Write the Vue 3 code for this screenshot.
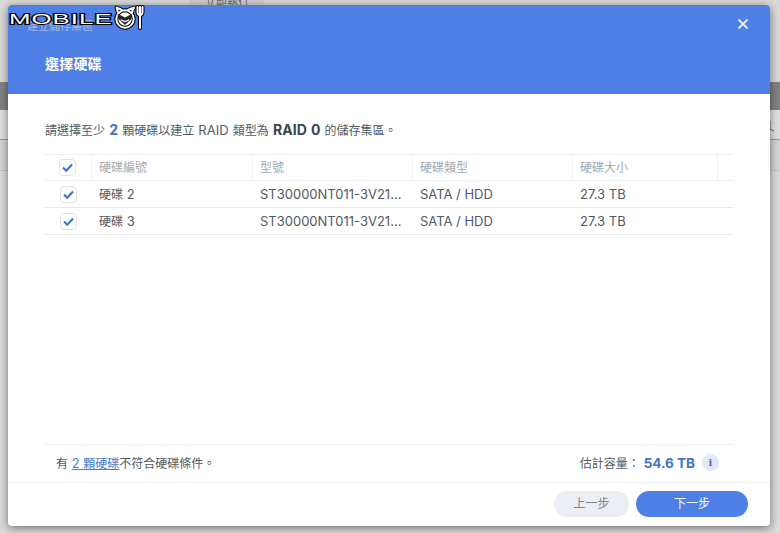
<template>
  <div class="page">
    <div class="backdrop">
      <div class="bg-top"><div class="bg-tab">立即執行</div></div>
      <div class="bg-band"></div>
      <div class="bg-row">
        <svg class="bg-mark" viewBox="0 0 8 12"><path d="M1 1V9L5 11" /></svg>
      </div>
      <div class="bg-row2"></div>
      <div class="bg-rest"></div>
    </div>

    <section class="dialog">
      <header class="head">
        <div class="crumb">建立儲存集區</div>
        <h1 class="title">選擇硬碟</h1>
        <svg class="close" viewBox="0 0 12 12" aria-label="關閉">
          <path d="M1.5 1.5 10.5 10.5M10.5 1.5 1.5 10.5" />
        </svg>
      </header>

      <div class="body">
        <p class="lead">
          <span class="zh">請選擇至少</span> <b class="blue">2</b> <span class="zh">顆硬碟以建立</span> RAID <span class="zh">類型為</span> <b class="dark">RAID 0</b> <span class="zh">的儲存集區。</span>
        </p>

        <div class="table">
          <div class="tr th">
            <div class="cell check"><span class="box"><svg viewBox="0 0 16 16"><path d="M3.2 8 6.6 11.4 12.9 4.8" /></svg></span></div>
            <div class="cell zh" v-for="c in columns" :key="c">{{ c }}</div>
            <div class="cell"></div>
          </div>
          <div class="tr" v-for="d in disks" :key="d.num">
            <div class="cell check"><span class="box"><svg viewBox="0 0 16 16"><path d="M3.2 8 6.6 11.4 12.9 4.8" /></svg></span></div>
            <div class="cell"><span class="zh">硬碟</span>&nbsp;{{ d.num }}</div>
            <div class="cell">{{ d.model }}</div>
            <div class="cell">{{ d.type }}</div>
            <div class="cell">{{ d.size }}</div>
            <div class="cell"></div>
          </div>
        </div>

        <div class="summary">
          <div><span class="zh">有</span> <a class="link">2 <span class="zh">顆硬碟</span></a><span class="zh">不符合硬碟條件。</span></div>
          <div class="capacity">
            <span class="zh">估計容量：</span>
            <b class="amount">54.6 TB</b>
            <span class="info">i</span>
          </div>
        </div>
      </div>

      <footer class="foot">
        <button class="btn prev zh">上一步</button>
        <button class="btn next zh">下一步</button>
      </footer>
    </section>

    <div class="logo">
      <span class="logo-text">MOBILE</span>
      <svg class="logo-face" viewBox="0 0 36 28">
        <g fill="none" stroke-linecap="round" stroke-linejoin="round">
          <g stroke="#000" stroke-width="4">
            <circle cx="12" cy="16" r="8.7" fill="#fff" />
            <path d="M5 9 3.5 4.5 9 7M19 9 21 4.5 15 7" />
            <path d="M24.5 4V9Q24.5 12 27 12Q29.5 12 29.5 9V4M27 4V25" />
          </g>
          <g stroke="#fff" stroke-width="2">
            <circle cx="12" cy="16" r="8.7" />
            <path d="M5 9 3.5 4.5 9 7M19 9 21 4.5 15 7" />
            <path d="M24.5 4V9Q24.5 12 27 12Q29.5 12 29.5 9V4M27 4V25" />
          </g>
          <path d="M5.5 11.5 12 15 18.5 11.5 18 16 12 21.5 6 16Z" fill="#222" stroke="#222" stroke-width="0.8" />
          <path d="M8.2 17 12 18.6 15.8 17" stroke="#fff" stroke-width="1.3" />
        </g>
      </svg>
    </div>
  </div>
</template>

<script setup>
const columns = ['硬碟編號', '型號', '硬碟類型', '硬碟大小']
const disks = [
  { num: 2, model: 'ST30000NT011-3V21...', type: 'SATA / HDD', size: '27.3 TB' },
  { num: 3, model: 'ST30000NT011-3V21...', type: 'SATA / HDD', size: '27.3 TB' }
]
</script>

<style>
html, body { margin: 0; background: #dcdcdc; }
</style>

<style scoped>
.page {
  position: relative;
  width: 780px;
  height: 533px;
  overflow: hidden;
  font-family: Inter, "Noto Sans CJK TC", sans-serif;
  font-size: 13px;
  color: #505a64;
}
.zh { font-size: 12px; }
.backdrop { display: flex; flex-direction: column; height: 100%; background: #dedede; }
.bg-top { height: 82px; background: #dadada; }
.bg-tab {
  width: 74px;
  height: 6px;
  margin-left: 190px;
  background: #cfcfcf;
  color: #666;
  font-size: 11px;
  line-height: 2px;
  text-align: center;
  overflow: hidden;
}
.bg-band { height: 28px; background: #828282; }
.bg-row {
  height: 29px;
  background: #e2e2e2;
  border-bottom: 1px solid #9a9a9a;
  display: flex;
  justify-content: flex-end;
}
.bg-mark {
  width: 8px;
  height: 12px;
  margin: 10px 3px 0 0;
  fill: none;
  stroke: #666;
  stroke-width: 1;
}
.bg-row2 { height: 30px; background: #d6d6d6; border-bottom: 1px solid #c4c4c4; }
.bg-rest { flex: 1; background: #dcdcdc; }

.dialog {
  position: absolute;
  left: 8px;
  top: 5px;
  width: 762px;
  height: 521px;
  display: flex;
  flex-direction: column;
  background: #fff;
  border-radius: 4px;
  overflow: hidden;
  box-shadow: 0 2px 10px rgba(0, 0, 0, 0.5);
}
.head {
  position: relative;
  height: 89px;
  flex: none;
  box-sizing: border-box;
  padding: 14px 37px 0 19px;
  background: #4d7fe4;
  color: #fff;
}
.crumb { font-size: 11px; line-height: 14px; opacity: 0.45; }
.title {
  margin: 21px 0 0 18px;
  font-size: 14px;
  line-height: 20px;
  font-weight: 700;
  letter-spacing: 0.2px;
}
.close {
  position: absolute;
  right: 21px;
  top: 13px;
  width: 12px;
  height: 12px;
  fill: none;
  stroke: #e6edfb;
  stroke-width: 1.9;
}
.body {
  flex: 1;
  display: flex;
  flex-direction: column;
  padding: 0 37px 0 36px;
  min-height: 0;
}
.lead { margin: 27px 0 0 1px; line-height: 18px; word-spacing: 0.5px; }
.blue { color: #3f6fc4; font-weight: 700; font-size: 14px; }
.dark { color: #3a4550; font-weight: 700; font-size: 14px; letter-spacing: 0.1px; }

.table { margin-top: 14px; border-top: 1px solid #eef0f2; }
.tr {
  display: grid;
  grid-template-columns: 48px 161px 160px 160px 145px 15px;
  height: 27px;
  box-sizing: border-box;
  border-bottom: 1px solid #e6e8eb;
}
.cell {
  display: flex;
  align-items: center;
  min-width: 0;
  padding: 0 0 1px 7px;
  white-space: nowrap;
}
.check { padding: 0 0 0 16px; }
.th { height: 26px; color: #a3aab2; border-bottom-color: #eef0f2; }
.th .cell { border-right: 1px solid #eef0f2; padding-bottom: 3px; }
.th .check { padding: 0 0 1px 15px; }
.th .cell:last-child { border-right: 0; }
.box {
  width: 17px;
  height: 17px;
  box-sizing: border-box;
  border: 1px solid #dfe3e9;
  border-radius: 4px;
  background: #fff;
  display: block;
}
.box svg {
  display: block;
  width: 15px;
  height: 15px;
  fill: none;
  stroke: #3f72d8;
  stroke-width: 2.3;
}

.summary {
  margin-top: auto;
  height: 38px;
  box-sizing: border-box;
  border-top: 1px solid #eef0f2;
  padding: 0 14px 2px 12px;
  display: flex;
  align-items: center;
  justify-content: space-between;
}
.link { color: #4a7cc8; text-decoration: underline; }
.capacity { display: flex; align-items: center; }
.amount { color: #4473c4; font-weight: 700; font-size: 13.5px; margin-left: 4px; }
.info {
  width: 17px;
  height: 17px;
  margin-left: 7px;
  border-radius: 50%;
  background: #e1e9f8;
  color: #4473c4;
  font: 700 10px/17px "DejaVu Serif", serif;
  text-align: center;
}
.foot {
  flex: none;
  height: 44px;
  box-sizing: border-box;
  border-top: 1px solid #eef0f2;
  padding: 8px 22px 0 0;
  display: flex;
  justify-content: flex-end;
  align-items: flex-start;
  gap: 7px;
}
.btn {
  height: 26px;
  border: 0;
  border-radius: 13px;
  padding: 0 0 1px;
  font-family: inherit;
  line-height: 25px;
}
.prev { width: 75px; background: #ebeef3; color: #7b838c; }
.next { width: 112px; background: #4d7fe4; color: #fff; }

.logo {
  position: absolute;
  left: 9px;
  top: 3px;
  display: flex;
  align-items: center;
  height: 28px;
}
.logo-text {
  display: block;
  width: 104px;
  font: 400 15px/16px "Liberation Sans", sans-serif;
  letter-spacing: 0.6px;
  color: #fff;
  -webkit-text-stroke: 2px #000;
  paint-order: stroke fill;
  transform: scaleX(1.72);
  transform-origin: left center;
  margin-top: 3px;
}
.logo-face { width: 36px; height: 28px; }
</style>
